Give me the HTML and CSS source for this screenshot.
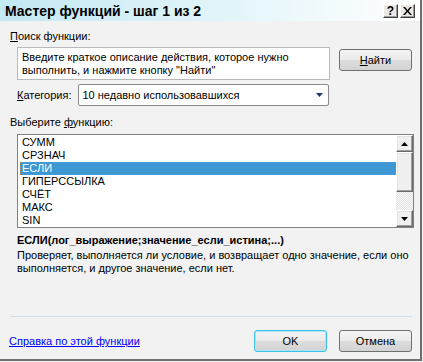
FILE: index.html
```html
<!DOCTYPE html>
<html lang="ru">
<head>
  <title>Мастер функций - шаг 1 из 2</title>
  <meta charset="utf-8">
  <link rel="stylesheet" href="styles.css">
</head>
<body>
  <div class="dialog">
    <div class="titlebar">
      <span class="title">Мастер функций - шаг 1 из 2</span>
      <div class="title-buttons">
        <span class="tbtn">?</span>
        <span class="tbtn">
          <svg width="9" height="8" viewBox="0 0 9 8"><path d="M0 0h2l2.5 3 2.5-3h2l-3.5 4 3.5 4h-2l-2.5-3-2.5 3h-2l3.5-4z" fill="#000"/></svg>
        </span>
      </div>
    </div>

    <div class="content">
      <div class="label"><u>П</u>оиск функции:</div>

      <div class="search-row">
        <div class="search-box">Введите краткое описание действия, которое нужно выполнить, и нажмите кнопку "Найти"</div>
        <button class="btn btn-find"><u>Н</u>айти</button>
      </div>

      <div class="category-row">
        <span><u>К</u>атегория:</span>
        <div class="combo">
          <span>10 недавно использовавшихся</span>
          <svg width="7" height="4" viewBox="0 0 7 4"><path d="M0 0h7l-3.5 4z" fill="#1c3a6e"/></svg>
        </div>
      </div>

      <div class="label label-list">Выберите <u>ф</u>ункцию:</div>

      <div class="listbox">
        <ul class="items">
          <li>СУММ</li>
          <li>СРЗНАЧ</li>
          <li class="selected">ЕСЛИ</li>
          <li>ГИПЕРССЫЛКА</li>
          <li>СЧЁТ</li>
          <li>МАКС</li>
          <li>SIN</li>
        </ul>
        <div class="scrollbar">
          <div class="sb-btn">
            <svg width="7" height="4" viewBox="0 0 7 4"><path d="M3.5 0l3.5 4h-7z" fill="#000"/></svg>
          </div>
          <div class="sb-thumb"></div>
          <div class="sb-track"></div>
          <div class="sb-btn">
            <svg width="7" height="4" viewBox="0 0 7 4"><path d="M0 0h7l-3.5 4z" fill="#000"/></svg>
          </div>
        </div>
      </div>

      <div class="signature">ЕСЛИ(лог_выражение;значение_если_истина;...)</div>
      <p class="desc">Проверяет, выполняется ли условие, и возвращает одно значение, если оно выполняется, и другое значение, если нет.</p>

      <div class="separator"></div>

      <div class="footer">
        <a class="help-link" href="#">Справка по этой функции</a>
        <div class="footer-buttons">
          <button class="btn btn-default">OK</button>
          <button class="btn">Отмена</button>
        </div>
      </div>
    </div>
  </div>
</body>
</html>
```

FILE: styles.css
```css
*, *::before, *::after {
  box-sizing: border-box;
}

body {
  margin: 0;
  background-color: #f2f2f2;
  font-family: "Liberation Sans", Arial, sans-serif;
  font-size: 11px;
  color: #000000;
}

.dialog {
  width: 422px;
  height: 361px;
  background-color: #f2f2f2;
  border-right: 2px solid #6f6f6f;
  border-bottom: 2px solid #6f6f6f;
}

.titlebar {
  display: flex;
  align-items: center;
  justify-content: space-between;
  height: 21px;
  padding: 0 5px 0 5px;
  background: linear-gradient(to right, #c3e9f2, #e6f6fa 60%, #ffffff);
}

.title {
  font-size: 14px;
  font-weight: bold;
}

.title-buttons {
  display: flex;
  gap: 2px;
}

.tbtn {
  display: flex;
  align-items: center;
  justify-content: center;
  width: 15px;
  height: 14px;
  background-color: #ece9e4;
  border-top: 1px solid #ffffff;
  border-left: 1px solid #ffffff;
  border-right: 1px solid #404040;
  border-bottom: 1px solid #404040;
  box-shadow: inset -1px -1px 0 #9a9a9a;
  font-size: 12px;
  font-weight: bold;
  line-height: 1;
}

.content {
  padding: 9px 8px 0 10px;
}

.label {
  line-height: 13px;
}

.label-list {
  margin-top: 10px;
}

.search-row {
  display: flex;
  align-items: flex-start;
  justify-content: space-between;
  margin-top: 4px;
  padding-left: 7px;
}

.search-box {
  width: 313px;
  height: 33px;
  padding: 3px 4px;
  background-color: #ffffff;
  border: 1px solid #b9b9b9;
  line-height: 13px;
}

.btn {
  height: 22px;
  padding: 0;
  border: 1px solid #707070;
  border-radius: 3px;
  background: linear-gradient(#f4f4f4, #ebebeb 50%, #dddddd 51%, #d3d3d3);
  font-family: "Liberation Sans", Arial, sans-serif;
  font-size: 11px;
  color: #000000;
}

.btn-find {
  width: 73px;
  margin-top: 2px;
}

.category-row {
  display: flex;
  align-items: center;
  gap: 6px;
  margin-top: 4px;
  padding-left: 7px;
}

.combo {
  display: flex;
  align-items: center;
  justify-content: space-between;
  width: 251px;
  height: 22px;
  padding: 0 5px 0 4px;
  background-color: #ffffff;
  border: 1px solid #8a8a8a;
  border-radius: 2px;
}

.listbox {
  display: flex;
  width: 397px;
  height: 94px;
  margin: 5px 0 0 7px;
  background-color: #ffffff;
  border: 1px solid #828282;
}

.items {
  flex: 1;
  margin: 0;
  padding: 1px 0 0 2px;
  list-style: none;
}

.items li {
  height: 13px;
  padding-left: 2px;
  line-height: 13px;
}

.items .selected {
  background-color: #3c97d3;
  color: #ffffff;
  outline: 1px dotted #e0752c;
  outline-offset: -1px;
}

.scrollbar {
  display: flex;
  flex-direction: column;
  width: 17px;
}

.sb-btn,
.sb-thumb {
  background-color: #f0f0f0;
  border-top: 1px solid #ffffff;
  border-left: 1px solid #ffffff;
  border-right: 1px solid #6a6a6a;
  border-bottom: 1px solid #6a6a6a;
  box-shadow: inset -1px -1px 0 #a0a0a0, inset 1px 1px 0 #e4e4e4;
}

.sb-btn {
  display: flex;
  align-items: center;
  justify-content: center;
  height: 17px;
}

.sb-thumb {
  height: 40px;
}

.sb-track {
  flex: 1;
  background-color: #f4f4f4;
  background-image: repeating-conic-gradient(#e2e2e2 0 25%, #fafafa 0 50%);
  background-size: 2px 2px;
}

.signature {
  margin-top: 6px;
  padding-left: 7px;
  font-weight: bold;
  line-height: 13px;
}

.desc {
  margin: 2px 0 0 0;
  padding-left: 7px;
  line-height: 13px;
}

.separator {
  height: 1px;
  margin: 41px 0 0 0;
  background-color: #d3dde5;
}

.footer {
  display: flex;
  align-items: center;
  justify-content: space-between;
  margin-top: 13px;
}

.help-link {
  margin-left: -1px;
  color: #0000ff;
}

.footer-buttons {
  display: flex;
  gap: 12px;
}

.footer-buttons .btn {
  width: 73px;
}

.btn-default {
  border-color: #3dc2ea;
  box-shadow: inset 0 0 0 1px #a9e5f5;
}
```
